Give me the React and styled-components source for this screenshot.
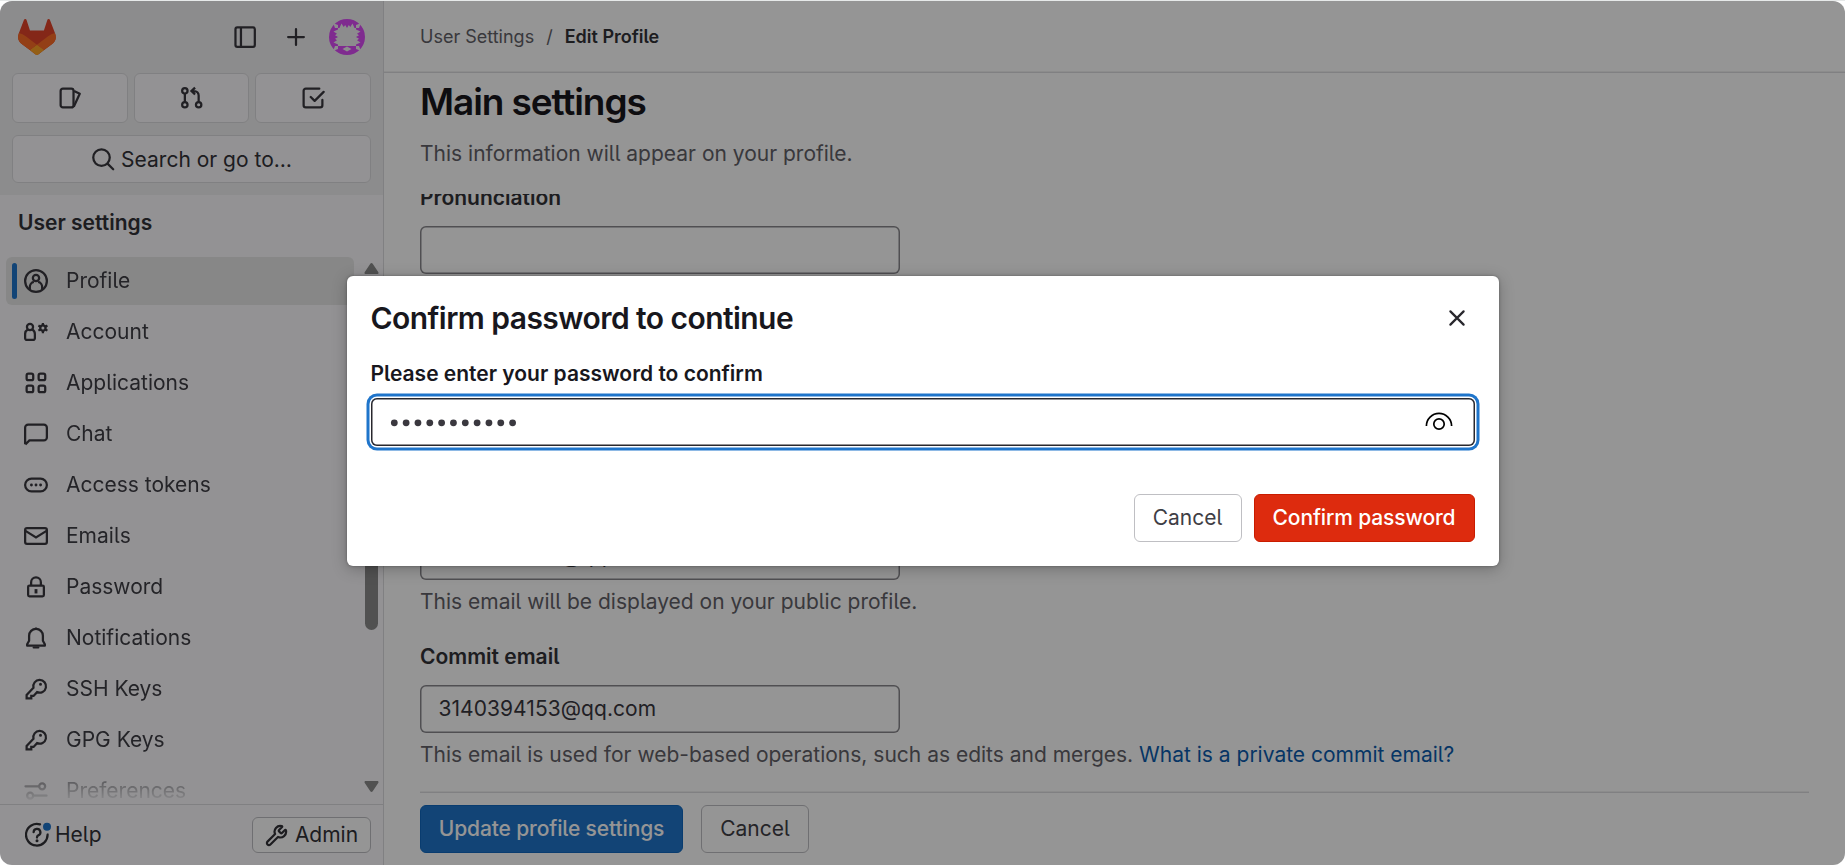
import React from "react";
import styled, { createGlobalStyle, css } from "styled-components";
import { Wrench } from "lucide-react";

const GlobalStyle = createGlobalStyle`
  * { box-sizing: border-box; }
  body {
    margin: 0;
    background: #fff;
    font-family: Inter, "Noto Sans", sans-serif;
    font-size: 21px;
    line-height: 30px;
    color: #3a383f;
    font-feature-settings: "cv05";
  }
  #root { height: 865px; }
  button, input { font: inherit; font-feature-settings: inherit; letter-spacing: inherit; color: inherit; }
`;

const Window = styled.div`
  height: 865px;
  border-top: 1px solid #e6e9e9;
  overflow: hidden;
  background: #fff;
`;

const Page = styled.div`
  position: relative;
  display: flex;
  height: 864px;
  border-radius: 12px;
  overflow: hidden;
  background: #fff;
`;

const Sidebar = styled.aside`
  width: 384px;
  flex: none;
  display: flex;
  flex-direction: column;
  background: #fbfafd;
  border-right: 1px solid #dcdcde;
`;

const SidebarTop = styled.div`
  height: 194px;
  padding: 18px 12px 12px;
  display: flex;
  flex-direction: column;
  background: #f0eff2;
`;

const BrandRow = styled.div`
  display: flex;
  align-items: center;
  height: 36px;
  margin-bottom: 18px;
  padding: 0 6px;
`;

const Logo = styled.svg`
  width: 38px;
  height: 36px;
  margin-right: auto;
`;

const Glyph = styled.svg`
  width: 24px;
  height: 24px;
  flex: none;
  fill: none;
  stroke: ${(p) => p.$color || "#3a383f"};
  stroke-width: 1.5;
  margin-right: ${(p) => p.$gap || 0}px;
`;

const CounterGrid = styled.div`
  display: grid;
  grid-template-columns: repeat(3, 1fr);
  gap: 6px;
  height: 50px;
  margin-bottom: 12px;
`;

const outlined = css`
  background: ${(p) => p.$bg || "#fbfafd"};
  border: 1px solid ${(p) => p.$edge || "#dcdcde"};
  border-radius: 6px;
`;

const CounterButton = styled.button`
  ${outlined}
  display: flex;
  align-items: center;
  justify-content: center;
  padding: 0;
`;

const SearchButton = styled.button`
  ${outlined}
  display: flex;
  align-items: center;
  justify-content: center;
  gap: 6px;
  height: 48px;
  padding: 1px 0 0;
  color: #333238;
`;

const ContextTitle = styled.div`
  height: 56px;
  padding: 13px 18px;
  font-weight: 600;
  color: #333238;
`;

const NavArea = styled.div`
  flex: 1;
  min-height: 0;
  display: flex;
  justify-content: space-between;
`;

const NavList = styled.nav`
  width: 354px;
  padding: 6px 0 0 6px;
  overflow: hidden;
  display: flex;
  flex-direction: column;
  gap: 3px;
  mask-image: linear-gradient(#000 calc(100% - 48px), transparent);
`;

const NavItem = styled.a`
  flex: none;
  display: flex;
  align-items: center;
  height: 48px;
  padding-left: 6px;
  border-radius: 6px;
  color: #3f3e45;
  background: ${(p) => (p.$active ? "#e7e7e7" : "transparent")};
`;

const ActiveMark = styled.span`
  width: 5px;
  height: 36px;
  margin-right: 7px;
  border-radius: 3px;
  background: ${(p) => (p.$active ? "#1f75cb" : "transparent")};
`;

const ScrollBar = styled.div`
  width: 16px;
  margin-right: 4px;
  padding: 12px 0;
  display: flex;
  flex-direction: column;
  align-items: center;
`;

const Arrow = styled.svg`
  width: 15px;
  height: 12px;
  flex: none;
  fill: #8b8b8b;
`;

const Thumb = styled.div`
  width: 13px;
  height: 351px;
  margin: 4px 0 auto;
  border-radius: 7px;
  background: #8b8b8b;
`;

const SidebarFooter = styled.div`
  height: 61px;
  flex: none;
  border-top: 1px solid #dcdcde;
  display: flex;
  align-items: center;
  justify-content: space-between;
  padding: 0 12px;
`;

const HelpLink = styled.a`
  display: flex;
  align-items: center;
  gap: 2px;
  padding-left: 13px;
  color: #333238;
`;

const AdminButton = styled.button`
  ${outlined}
  width: 119px;
  height: 36px;
  padding: 0;
  display: flex;
  align-items: center;
  justify-content: center;
  gap: 7px;
  color: #333238;
`;

const Main = styled.main`
  flex: 1;
  min-width: 0;
  display: flex;
  flex-direction: column;
`;

const TopBar = styled.header`
  height: 72px;
  flex: none;
  display: flex;
  align-items: center;
  gap: 12px;
  padding: 1px 36px 0;
  border-bottom: 1px solid #dcdcde;
  box-shadow: inset 0 -1px 0 #efeff0;
  font-size: 18px;
  color: #626168;
`;

const Current = styled.span`
  font-weight: 600;
  color: #333238;
`;

const Content = styled.div`
  flex: 1;
  min-height: 0;
  padding: 0 36px;
  display: flex;
  flex-direction: column;
`;

const SectionHead = styled.div`
  height: 121px;
  flex: none;
  padding-top: 6px;
`;

const Title = styled.h1`
  margin: 0 0 14px;
  font-size: 37px;
  line-height: 46px;
  font-weight: 600;
  letter-spacing: -1.1px;
  color: #18171d;
`;

const Hint = styled.p`
  margin: 0;
  color: #626168;
`;

const Link = styled.a`
  color: #0b5cad;
`;

const FormScroll = styled.div`
  flex: 1;
  min-height: 0;
  overflow: hidden;
`;

const Field = styled.div`
  margin-top: ${(p) => p.$top}px;
`;

const Label = styled.label`
  display: block;
  margin-bottom: 13px;
  font-weight: 600;
  color: #333238;
`;

const TextInput = styled.input`
  display: block;
  width: 480px;
  height: 48px;
  margin: 0 0 7px;
  padding: 0 18.5px 1px;
  border: 0;
  border-radius: 6px;
  outline: 0;
  background: #fff;
  color: #3a383f;
  letter-spacing: 0.05px;
  box-shadow: inset 0 0 0 1.5px #89888d;
`;

const FormFooter = styled.div`
  height: 73px;
  flex: none;
  display: flex;
  align-items: flex-start;
  gap: 18px;
  padding-top: 12px;
  border-top: 1px solid #dcdcde;
  box-shadow: 0 -1px 0 #efeff0;
`;

const palette = {
  plain: css`
    background: #fff;
    color: #3f3e45;
    border: 1px solid #bfbfc3;
  `,
  confirm: css`
    background: #1f75cb;
    color: #fff;
    border: 1px solid #1068bf;
  `,
  danger: css`
    background: #dd2b0e;
    color: #fff;
    border: 1px solid #c91c00;
  `,
};

const Button = styled.button`
  width: ${(p) => p.$width}px;
  height: 48px;
  padding: 0;
  border-radius: 6px;
  white-space: nowrap;
  ${(p) => palette[p.$kind || "plain"]}
`;

const StrongText = styled.span`
  font-weight: 500;
  letter-spacing: -0.12px;
`;

const Backdrop = styled.div`
  position: absolute;
  inset: 0;
  background: rgba(0, 0, 0, 0.415);
  display: flex;
  justify-content: center;
  align-items: flex-start;
  padding-top: 275px;
`;

const Dialog = styled.section`
  width: 1152px;
  height: 290px;
  padding: 24px;
  border-radius: 6px;
  background: #fff;
  box-shadow: 0 0 3px rgba(0, 0, 0, 0.3), 0 3px 15px rgba(0, 0, 0, 0.25);
  display: flex;
  flex-direction: column;
`;

const DialogHead = styled.div`
  display: flex;
  justify-content: space-between;
  height: 36px;
  align-items: center;
  padding-right: 10px;
`;

const DialogTitle = styled.h2`
  margin: 0;
  font-size: 30px;
  line-height: 36px;
  font-weight: 600;
  letter-spacing: -0.55px;
  color: #18171d;
`;

const DialogLabel = styled.label`
  margin: 23px 0 9px;
  font-weight: 600;
  color: #18171d;
`;

const PasswordBox = styled.div`
  display: flex;
  align-items: center;
  justify-content: space-between;
  height: 48px;
  padding: 0 22px 0 18px;
  border-radius: 6px;
  box-shadow: inset 0 0 0 1.5px #28272d, 0 0 0 1.5px #fff, 0 0 0 4.5px #1f75cb;
`;

const Dots = styled.svg`
  width: 130px;
  height: 12px;
  fill: #3a383f;
`;

const DialogActions = styled.div`
  display: flex;
  justify-content: flex-end;
  gap: 12px;
  margin-top: auto;
`;

const icons = {
  panel: <><rect x="1.65" y="1.65" width="12.9" height="12.9" rx="1.2" /><path d="M5.3 1.7v12.8" /></>,
  plus: <path d="M8 2.75v10.5M2.75 8h10.5" strokeLinecap="round" />,
  cards: <><rect x="1.75" y="1.75" width="8.6" height="12.5" rx="1.5" /><path d="M10.7 3.3 14.5 5.2 10.5 13.8" strokeLinejoin="round" /></>,
  merge: <><circle cx="3.9" cy="3.2" r="1.8" /><circle cx="3.9" cy="12.5" r="1.8" /><circle cx="13.1" cy="12.5" r="1.8" /><path d="M3.9 5v5.7M13.1 10.7V6.4a3 3 0 0 0-3-3H8.7M10.7 1.1 8.3 3.4l2.4 2.3" /></>,
  todo: <><path d="M12.2 1.75H3.2a1.45 1.45 0 0 0-1.45 1.45v9.6a1.45 1.45 0 0 0 1.45 1.45h9.6a1.45 1.45 0 0 0 1.45-1.45V9.3" strokeLinecap="round" /><path d="m6.5 7.3 2.6 2.6 6-6" strokeLinecap="round" strokeLinejoin="round" /></>,
  search: <><circle cx="7" cy="6.4" r="5.5" /><path d="m11 10.4 3.8 3.8" strokeLinecap="round" /></>,
  profile: <><circle cx="8" cy="8" r="7.25" /><circle cx="8" cy="6" r="2.1" /><path d="M3.9 13.8v-1.6A3.4 3.4 0 0 1 6.6 8.6M12.1 13.8v-1.6a3.4 3.4 0 0 0-2.7-3.6" /></>,
  account: <><circle cx="4" cy="4.7" r="2.05" /><path d="M2.5 6.3A3.5 3.5 0 0 0 .75 9.5v2.6a1.15 1.15 0 0 0 1.15 1.15h4.2a1.15 1.15 0 0 0 1.15-1.15V9.5A3.5 3.5 0 0 0 5.5 6.3" /><circle cx="12.6" cy="5.4" r="1.75" /><path d="M12.6 2v1.5M12.6 7.3v1.5M9.6 3.7l1.3.75M14.3 6.35l1.3.75M9.6 7.1l1.3-.75M14.3 4.45l1.3-.75" /></>,
  apps: <><rect x="1.75" y="1.75" width="4.4" height="4.4" rx="1.2" /><rect x="9.75" y="1.75" width="4.4" height="4.4" rx="1.2" /><rect x="1.75" y="9.75" width="4.4" height="4.4" rx="1.2" /><rect x="9.75" y="9.75" width="4.4" height="4.4" rx="1.2" /></>,
  chat: <path d="M.75 14.9V3.75a2 2 0 0 1 2-2h10.5a2 2 0 0 1 2 2v6.5a2 2 0 0 1-2 2H3.6L.9 15" />,
  token: <><rect x=".75" y="3.75" width="14.5" height="8.5" rx="4.25" /><path d="M4.95 8h.01M8 8h.01M11.05 8h.01" strokeWidth="1.9" strokeLinecap="round" /></>,
  mail: <><rect x=".75" y="2.75" width="14.5" height="10.5" rx="1.25" /><path d="M1 4.6 8 8.9l7-4.3" /></>,
  lock: <><rect x="2.75" y="7" width="10.5" height="7.25" rx=".9" /><path d="M4.75 7V4.9a3.25 3.25 0 0 1 6.5 0V7" /><path d="M8 9.4v2.9" strokeWidth="1.9" /></>,
  bell: <><path d="M8 1v1.2M3.4 6.5a4.6 4.6 0 0 1 9.2 0v3.3l1.3 2.4v.9H2.1v-.9l1.3-2.4Z" strokeLinejoin="round" /><path d="M6.4 14.3h3.2" strokeWidth="1.4" strokeLinecap="round" /></>,
  key: <><path d="M6.3 7.2 1.75 11.9v2.35h3.1v-1.6h1.5L8.7 10.1A4.25 4.25 0 1 0 6.3 7.2Z" /><circle cx="11" cy="4.9" r=".5" strokeWidth="1" /></>,
  sliders: <><circle cx="12.1" cy="4.9" r="2" /><path d="M1 4.9h9M6.2 11.1H15" strokeLinecap="round" /><circle cx="4.1" cy="11.1" r="2" /></>,
  close: <path d="m3.6 3.6 8.8 8.8M12.4 3.6 3.6 12.4" strokeLinecap="round" />,
};

function Icon({ name, gap, color }) {
  return (
    <Glyph viewBox="0 0 16 16" $gap={gap} $color={color} aria-hidden="true">
      {icons[name]}
    </Glyph>
  );
}

const AvatarSvg = styled.svg`
  width: 36px;
  height: 36px;
`;

function Avatar() {
  return (
    <AvatarSvg viewBox="0 0 36 36">
      <defs>
        <clipPath id="round"><circle cx="18" cy="18" r="18" /></clipPath>
        <path id="side" d="M9 0h18v9h-1.5l-2-4.5-2.2 3.5-1.5-2-1.8 3-1.8-3-1.5 2-2.200-3.500-2 4.500H9z" />
      </defs>
      <g clipPath="url(#round)" fill="#d94af5">
        <rect width="36" height="36" fill="#f0eff2" />
        <use href="#side" />
        <use href="#side" transform="rotate(-90 18 18)" />
        <use href="#side" transform="rotate(90 18 18)" />
        <path fillRule="evenodd" d="M9 27h18v9H9zM18 27.5l4.500 2.500-4.500 2.500-4.500-2.500z" />
        <path d="M5 4.500 9 2v4zM4.500 5 2 9h4zM31 4.500 27 2v4zM31.500 5 34 9h-4zM5 31.500 9 34v-4zM4.500 31 2 27h4zM31 31.500 27 34v-4zM31.500 31 34 27h-4z" />
      </g>
    </AvatarSvg>
  );
}

const HelpGlyph = styled.svg`
  width: 28px;
  height: 26px;
  flex: none;
  fill: none;
  stroke: #333238;
  stroke-width: 2.25;
  stroke-linecap: round;
`;

const EyeGlyph = styled.svg`
  width: 28px;
  height: 20px;
  fill: none;
  stroke: #000;
  stroke-width: 1.7;
`;

const navItems = [
  ["Profile", "profile"],
  ["Account", "account"],
  ["Applications", "apps"],
  ["Chat", "chat"],
  ["Access tokens", "token"],
  ["Emails", "mail"],
  ["Password", "lock"],
  ["Notifications", "bell"],
  ["SSH Keys", "key"],
  ["GPG Keys", "key"],
  ["Preferences", "sliders"],
];

export default function App() {
  return (
    <Window>
      <GlobalStyle />
      <Page>
        <Sidebar>
          <SidebarTop>
            <BrandRow>
              <Logo viewBox="0 0 25 24">
                <path fill="#e24329" d="m24.507 9.5-.034-.09L21.082.562a.896.896 0 0 0-1.694.091l-2.29 7.01H7.825L5.535.653a.898.898 0 0 0-1.694-.09L.451 9.411.416 9.5a6.297 6.297 0 0 0 2.09 7.278l.012.01.03.022 5.16 3.867 2.56 1.935 1.554 1.176a1.051 1.051 0 0 0 1.268 0l1.555-1.176 2.56-1.935 5.197-3.89.014-.01A6.297 6.297 0 0 0 24.507 9.5Z" />
                <path fill="#fc6d26" d="m24.507 9.5-.034-.09a11.44 11.44 0 0 0-4.56 2.051l-7.447 5.632 4.742 3.584 5.197-3.89.014-.01A6.297 6.297 0 0 0 24.507 9.5Z" />
                <path fill="#fca326" d="m7.707 20.677 2.56 1.935 1.555 1.176a1.051 1.051 0 0 0 1.268 0l1.555-1.176 2.56-1.935-4.743-3.584-4.755 3.584Z" />
                <path fill="#fc6d26" d="M5.01 11.461a11.43 11.43 0 0 0-4.56-2.05L.416 9.5a6.297 6.297 0 0 0 2.09 7.278l.012.01.03.022 5.16 3.867 4.745-3.584-7.444-5.632Z" />
              </Logo>
              <Icon name="panel" gap={27} />
              <Icon name="plus" gap={21} />
              <Avatar />
            </BrandRow>
            <CounterGrid>
              <CounterButton><Icon name="cards" /></CounterButton>
              <CounterButton><Icon name="merge" /></CounterButton>
              <CounterButton><Icon name="todo" /></CounterButton>
            </CounterGrid>
            <SearchButton><Icon name="search" />Search or go to…</SearchButton>
          </SidebarTop>
          <ContextTitle>User settings</ContextTitle>
          <NavArea>
            <NavList>
              {navItems.map(([label, icon], i) => (
                <NavItem key={label} $active={i === 0}>
                  <ActiveMark $active={i === 0} />
                  <Icon name={icon} gap={18} />
                  {label}
                </NavItem>
              ))}
            </NavList>
            <ScrollBar>
              <Arrow viewBox="0 0 15 12"><path d="M6.3.8a1.5 1.5 0 0 1 2.4 0l5.5 8.2c.7 1 .2 2-1 2H1.8c-1.2 0-1.7-1-1-2Z" /></Arrow>
              <Thumb />
              <Arrow viewBox="0 0 15 12"><path d="M6.3 11.2a1.5 1.5 0 0 0 2.4 0l5.5-8.2c.7-1 .2-2-1-2H1.8c-1.2 0-1.7 1-1 2Z" /></Arrow>
            </ScrollBar>
          </NavArea>
          <SidebarFooter>
            <HelpLink>
              <HelpGlyph viewBox="0 0 28 26">
                <path d="M15 2.4A10.8 10.8 0 1 0 22.6 12.5" />
                <path d="M8.6 10.2a3.4 3.4 0 1 1 4.7 3.2c-.9.4-1.3.9-1.3 1.9v.3" />
                <path d="M12 18.8h.01" strokeWidth="3" />
                <circle cx="22" cy="4.8" r="4" fill="#1f75cb" stroke="none" />
              </HelpGlyph>
              Help
            </HelpLink>
            <AdminButton $bg="#fff" $edge="#bfbfc3">
              <Wrench size={23} strokeWidth={2.3} />
              Admin
            </AdminButton>
          </SidebarFooter>
        </Sidebar>
        <Main>
          <TopBar>
            <span>User Settings</span>
            <span>/</span>
            <Current>Edit Profile</Current>
          </TopBar>
          <Content>
            <SectionHead>
              <Title>Main settings</Title>
              <Hint>This information will appear on your profile.</Hint>
            </SectionHead>
            <FormScroll>
              <Field $top={-11}>
                <Label>Pronunciation</Label>
                <TextInput readOnly />
              </Field>
              <Field $top={258}>
                <TextInput readOnly value="3140394153@qq.com" />
                <Hint>This email will be displayed on your public profile.</Hint>
              </Field>
              <Field $top={25}>
                <Label>Commit email</Label>
                <TextInput readOnly value="3140394153@qq.com" />
                <Hint>
                  This email is used for web-based operations, such as edits and merges.{" "}
                  <Link>What is a private commit email?</Link>
                </Hint>
              </Field>
            </FormScroll>
            <FormFooter>
              <Button $kind="confirm" $width={263}><StrongText>Update profile settings</StrongText></Button>
              <Button $width={108}>Cancel</Button>
            </FormFooter>
          </Content>
        </Main>
        <Backdrop>
          <Dialog>
            <DialogHead>
              <DialogTitle>Confirm password to continue</DialogTitle>
              <Glyph viewBox="0 0 16 16" $color="#28272d" $gap={-4}>{icons.close}</Glyph>
            </DialogHead>
            <DialogLabel>Please enter your password to confirm</DialogLabel>
            <PasswordBox>
              <Dots viewBox="0 0 130 12">
                {Array.from({ length: 11 }, (_, i) => (
                  <circle key={i} cx={5.3 + i * 11.83} cy="6.8" r="3.4" />
                ))}
              </Dots>
              <EyeGlyph viewBox="0 0 28 20">
                <path d="M1.4 14a12.6 12.6 0 0 1 25.2 0" />
                <circle cx="14" cy="12" r="5.2" />
              </EyeGlyph>
            </PasswordBox>
            <DialogActions>
              <Button $width={108}>Cancel</Button>
              <Button $kind="danger" $width={221}><StrongText>Confirm password</StrongText></Button>
            </DialogActions>
          </Dialog>
        </Backdrop>
      </Page>
    </Window>
  );
}
